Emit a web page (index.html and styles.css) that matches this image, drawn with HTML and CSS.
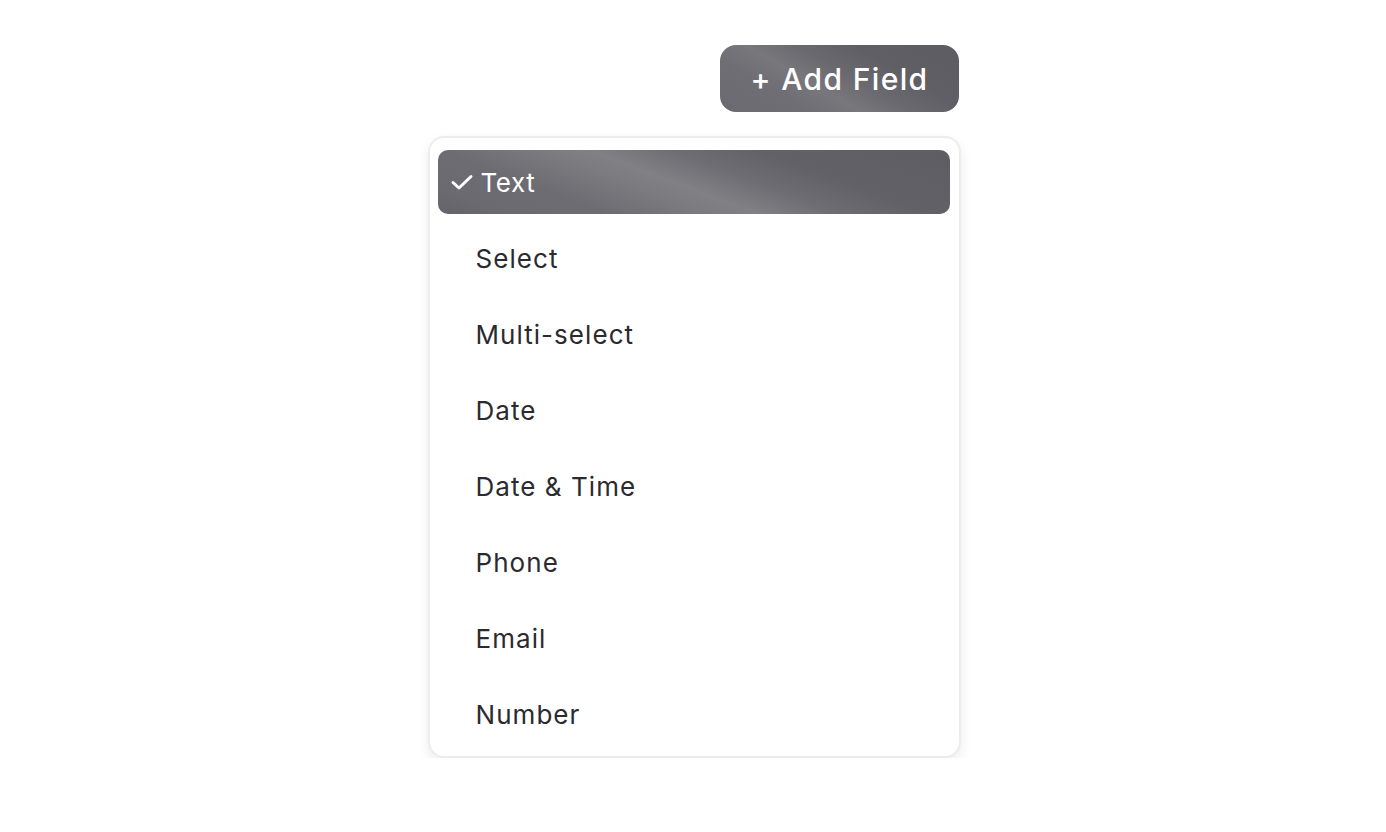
FILE: index.html
```html
<!DOCTYPE html>
<html>
<head>
<meta charset="utf-8">
<link rel="stylesheet" href="styles.css">
</head>
<body>
<div class="wrap">
  <button class="add-btn">+ Add Field</button>
  <div class="menu">
    <div class="item selected">
      <svg class="check" width="24" height="18" viewBox="0 0 24 18"><path d="M3 9.5 L9 15 L21 3.5" fill="none" stroke="#fff" stroke-width="3" stroke-linecap="round" stroke-linejoin="round"/></svg>
      <span>Text</span>
    </div>
    <div class="item">Select</div>
    <div class="item">Multi-select</div>
    <div class="item">Date</div>
    <div class="item">Date &amp; Time</div>
    <div class="item">Phone</div>
    <div class="item">Email</div>
    <div class="item">Number</div>
  </div>
</div>
</body>
</html>
```
FILE: styles.css
```css
html, body {
  margin: 0;
  padding: 0;
  background: #ffffff;
}
body {
  font-family: Inter, "Noto Sans", "Liberation Sans", sans-serif;
}
.wrap {
  width: 533px;
  margin: 45px auto 0;
  display: flex;
  flex-direction: column;
  align-items: flex-end;
  gap: 24px;
  position: relative;
  left: 1px;
}
.add-btn {
  height: 67px;
  width: 239px;
  margin-right: 2px;
  border: none;
  border-radius: 16px;
  color: #ffffff;
  font-family: Inter, "Noto Sans", "Liberation Sans", sans-serif;
  font-size: 30px;
  font-weight: 500;
  letter-spacing: 1.35px;
  padding: 0 0 0 1px;
  background: linear-gradient(210deg, #5c5c62 0%, #5f5f65 30%, #69696f 46%, #77777c 60%, #6e6e74 74%, #6a6a70 100%);
}
.menu {
  box-sizing: border-box;
  width: 533px;
  border: 2px solid #ededed;
  border-radius: 16px;
  padding: 12px 9px 10px 8px;
  display: flex;
  flex-direction: column;
  gap: 12px;
  background: #ffffff;
  box-shadow: 0 5px 12px rgba(0,0,0,0.08);
}
.item {
  height: 64px;
  display: flex;
  align-items: center;
  padding-left: 38px;
  font-size: 26px;
  color: #2b2b2f;
  letter-spacing: 1.05px;
}
.item.selected {
  padding-left: 12px;
  gap: 7px;
  border-radius: 10px;
  color: #ffffff;
  letter-spacing: 0.6px;
  background: linear-gradient(201deg, #5d5d63 0%, #616167 28%, #6d6d73 41%, #808085 53%, #7a7a7f 61%, #6c6c72 75%, #6a6a70 90%, #636369 100%);
}
.check {
  display: block;
}
```
